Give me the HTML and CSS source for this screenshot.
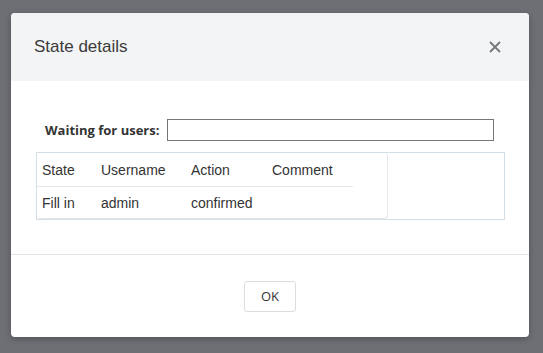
FILE: index.html
```html
<!DOCTYPE html>
<html lang="en">
<head>
  <meta charset="UTF-8">
  <meta name="viewport" content="width=device-width, initial-scale=1.0">
  <title>State details</title>
  <link rel="stylesheet" href="styles.css">
</head>
<body>
  <div class="modal">
    <div class="modal-header">
      <h2 class="modal-title">State details</h2>
      <button class="close-btn" aria-label="Close">
        <svg width="12" height="12" viewBox="0 0 12 12">
          <path d="M1 1 L11 11 M11 1 L1 11" stroke="#777" stroke-width="1.8" fill="none"/>
        </svg>
      </button>
    </div>
    <div class="modal-body">
      <div class="form-row">
        <label for="waiting">Waiting for users:</label>
        <input type="text" id="waiting" value="">
      </div>
      <div class="states-box">
        <div class="states-table-wrap">
          <table class="states-table">
            <thead>
              <tr>
                <th class="col-state">State</th>
                <th class="col-user">Username</th>
                <th class="col-action">Action</th>
                <th class="col-comment">Comment</th>
              </tr>
            </thead>
            <tbody>
              <tr>
                <td>Fill in</td>
                <td>admin</td>
                <td>confirmed</td>
                <td></td>
              </tr>
            </tbody>
          </table>
        </div>
      </div>
    </div>
    <div class="modal-footer">
      <button class="ok-btn">OK</button>
    </div>
  </div>
</body>
</html>
```

FILE: styles.css
```css
body {
  margin: 0;
  padding: 13px 0 0 11px;
  background-color: #6e6f74;
  font-family: "Liberation Sans", Arial, sans-serif;
  color: #333;
  height: 353px;
  box-sizing: border-box;
  overflow: hidden;
}
.modal {
  width: 518px;
  height: 324px;
  background: white;
  border-radius: 4px;
  box-shadow: 0 2px 6px rgba(0, 0, 0, 0.25);
  overflow: hidden;
  display: flex;
  flex-direction: column;
}
.modal-header {
  height: 68px;
  background-color: #f3f4f6;
  display: flex;
  align-items: center;
  justify-content: space-between;
  padding: 0 28px 0 23px;
}
.modal-title {
  margin: 0;
  font-size: 17px;
  font-weight: normal;
  color: #3a3a3a;
}
.close-btn {
  border: none;
  background: none;
  padding: 0;
  width: 12px;
  height: 12px;
  display: flex;
  cursor: pointer;
}
.modal-body {
  height: 174px;
  padding: 38px 24px 0 25px;
  box-sizing: border-box;
  border-bottom: 1px solid #e4e5e8;
}
.form-row {
  display: flex;
  align-items: center;
  padding-left: 9px;
  margin-right: 11px;
  height: 22px;
}
.form-row label {
  font-family: "Open Sans", sans-serif;
  font-weight: bold;
  font-size: 13px;
  color: #333;
  margin-right: 8px;
  white-space: nowrap;
}
.form-row input {
  flex: 1;
  height: 22px;
  box-sizing: border-box;
  border: 1px solid #767676;
  border-radius: 0;
  padding: 0 4px;
  margin: 0;
}
.states-box {
  margin-top: 11px;
  height: 68px;
  box-sizing: border-box;
  border: 1px solid #d3dee5;
  display: flex;
}
.states-table-wrap {
  width: 351px;
  height: 66px;
  box-sizing: border-box;
  border: 1px solid #e3e6ea;
  border-radius: 4px;
  border-top-width: 0;
  border-left-width: 0;
}
.states-table {
  border-collapse: collapse;
  font-size: 14px;
  color: #333;
}
.states-table th {
  font-weight: normal;
  text-align: left;
  height: 33px;
  padding: 0 0 0 5px;
  border-bottom: 1px solid #e3e6ea;
}
.states-table td {
  height: 32px;
  padding: 0 0 0 5px;
}
.col-state { width: 54px; }
.col-user { width: 85px; }
.col-action { width: 76px; }
.col-comment { width: 81px; }
.modal-footer {
  flex: 1;
  display: flex;
  align-items: center;
  justify-content: center;
}
.ok-btn {
  width: 52px;
  height: 31px;
  background: white;
  border: 1px solid #dcdde2;
  border-radius: 3px;
  font-family: "Open Sans", sans-serif;
  font-size: 13px;
  color: #333;
  padding: 0;
  cursor: pointer;
}
```
